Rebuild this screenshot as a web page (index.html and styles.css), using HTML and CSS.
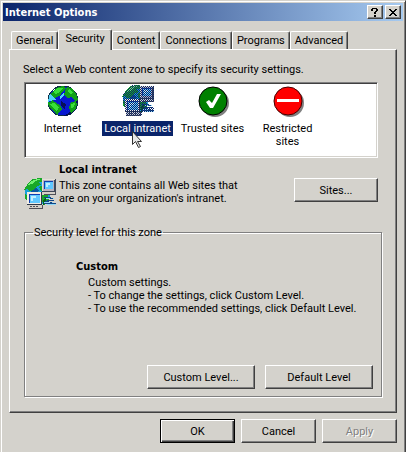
FILE: index.html
```html
<!DOCTYPE html>
<html lang="en">
<head>
<meta charset="utf-8">
<title>Internet Options</title>
<link rel="stylesheet" href="styles.css">
</head>
<body>
<svg class="defs" aria-hidden="true">
  <defs>
    <pattern id="weave" width="2" height="2" patternUnits="userSpaceOnUse">
      <path fill="#0a246a" d="M0 0h1v1H0zM1 1h1v1H1z"/>
    </pattern>
    <g id="network" shape-rendering="crispEdges">
      <circle cx="14" cy="14" r="13" fill="#18a0d8"/>
      <path fill="#0858a0" d="M8 11l4-1 3 2-3 3H7z"/>
      <path fill="#18a828" d="M4 5 9 1l8-1 3 3-5 1 2 3-4 1-3 4-4 1-3-2-3 1zM1 15l2 3v5l-2-3zM15 9l5-2v7l-3-1zM18 15l5 1 2 4-1 4-4 3-2-4z"/>
      <path fill="#70f070" d="M7 3l6-2h4l-5 2-4 3-4 1z"/>
      <path fill="#086018" d="M19 22l4-3-1 5-3 3z"/>
      <path fill="#404858" d="M18 1h14v13H18z"/>
      <path fill="#e4e0d8" d="M18 1h13v1H19v11h-1z"/>
      <path fill="#b8b4c0" d="M19 2h11v11H19z"/>
      <path fill="#1040b0" d="M20 3h9v8h-9z"/>
      <path fill="#60c8ff" d="M21 4h8v7h-8z"/>
      <path fill="#c0f0ff" d="M22 5h4v2h-2v2h-2z"/>
      <path fill="#d4d0c8" d="M18 14h13v3H18z"/>
      <path fill="#505058" d="M20 16h12v1H20zM31 14h1v3h-1z"/>
      <path fill="#303848" d="M3 14h15v13H3z"/>
      <path fill="#f0ece4" d="M3 14h14v12H3z"/>
      <path fill="#1040b0" d="M5 16h11v9H5z"/>
      <path fill="#60c8ff" d="M6 17h10v8H6z"/>
      <path fill="#c0f0ff" d="M7 18h5v2H9v3H7z"/>
      <path fill="#d4d0c8" d="M4 27h15v3H4z"/>
      <path fill="#505058" d="M6 28h2v1H6zM9 28h2v1H9zM12 28h2v1h-2zM5 30h14v1H5zM18 27h1v4h-1z"/>
      <path fill="#90d8f8" d="M22 20h8v1h-8zM20 24h9v1h-9zM23 26h9v1h-9z"/>
      <path fill="#104888" d="M20 19h7v1h-7zM26 20h3v1h-3zM23 22h7v1h-7zM21 23h4v1h-4zM20 25h12v1H20zM26 24h2v1h-2z"/>
    </g>
  </defs>
</svg>
<main class="window">
  <header class="titlebar">
    <h1>Internet Options</h1>
    <button class="caption" type="button" aria-label="Help">
      <svg width="8" height="9" viewBox="0 0 8 9" shape-rendering="crispEdges"><path d="M1 0h5v1H1zM0 1h2v2H0zM5 1h2v2H5zM4 3h2v1H4zM3 4h2v2H3zM3 7h2v2H3z"/></svg>
    </button>
    <button class="caption" type="button" aria-label="Close">
      <svg width="8" height="7" viewBox="0 0 8 7" shape-rendering="crispEdges"><path d="M0 0h2v1H0zM6 0h2v1H6zM1 1h2v1H1zM5 1h2v1H5zM2 2h4v1H2zM3 3h2v1H3zM2 4h4v1H2zM1 5h2v1H1zM5 5h2v1H5zM0 6h2v1H0zM6 6h2v1H6z"/></svg>
    </button>
  </header>
  <div class="content">
    <nav class="tabs" role="tablist">
      <button class="tab" type="button" role="tab">General</button>
      <button class="tab selected" type="button" role="tab" aria-selected="true">Security</button>
      <button class="tab" type="button" role="tab">Content</button>
      <button class="tab" type="button" role="tab">Connections</button>
      <button class="tab" type="button" role="tab">Programs</button>
      <button class="tab" type="button" role="tab">Advanced</button>
    </nav>
    <section class="panel">
      <p class="prompt">Select a Web content zone to specify its security settings.</p>
      <ul class="zones">
        <li class="zone">
          <svg width="32" height="32" viewBox="0 0 32 32" shape-rendering="crispEdges">
            <circle cx="16" cy="16" r="15" fill="#0818d0" stroke="#103048"/>
            <path fill="#061058" d="M28 7c4 7 3 14 0 18-4 5-8 6-12 6 6-2 10-6 12-12S29 11 28 7zM14 16l5 3-1 5-4-3z"/>
            <path fill="#10a018" d="M4 8 9 3l7-2 3 2-3 3-3 5-4 1-3 4H2zM1 17l5-1 7 4 2 4-3 3-1 3-4-3-5-5zM20 2l6 2 4 7 1 4-3 1-3-4-5 1-3-4zM24 17l5-1 1 4-2 5-4 3-2-5z"/>
            <path fill="#38e038" d="M6 7l5-4h5l-4 5-4 1zM2 19l5-1 5 4-2 4-4-3zM22 4l4 3-2 3-3-3zM24 19l4-1-1 4-3 1z"/>
            <path fill="#50d0f8" d="M3 8l3 4 3 3H6l-5 2 1-5zM13 11l4-3v2l-4 4z"/>
            <path fill="#e8ffff" d="M5 6l3-2-2 3z"/>
          </svg>
          <span class="label">Internet</span>
        </li>
        <li class="zone">
          <svg width="32" height="32" viewBox="0 0 32 32">
            <use href="#network"/>
            <path fill="url(#weave)" shape-rendering="crispEdges" d="M9 0h9v1h14v16h-7v5h7v5H20v4H4v-4H3v-5L1 18V10L4 5z"/>
          </svg>
          <span class="label active">Local intranet</span>
          <svg class="pointer" width="13" height="20" viewBox="0 0 13 20"><path fill="#e8e8e8" stroke="#333" d="M1.500 1.500v13l3-3 3 6 2-1-3-5h4z"/></svg>
        </li>
        <li class="zone">
          <svg width="32" height="32" viewBox="0 0 32 32">
            <circle cx="18" cy="18" r="14" fill="#808080"/>
            <circle cx="16" cy="16" r="14" fill="#008000" stroke="#000"/>
            <path fill="#fff" d="M9 17l3-2 3 3 5-9h4l-8 14h-3z"/>
          </svg>
          <span class="label">Trusted sites</span>
        </li>
        <li class="zone">
          <svg width="32" height="32" viewBox="0 0 32 32">
            <circle cx="18" cy="18" r="14" fill="#808080"/>
            <circle cx="16" cy="16" r="14" fill="#f00" stroke="#400"/>
            <path fill="#fff" d="M5 14h22v3H5z"/>
          </svg>
          <span class="label">Restricted<br>sites</span>
        </li>
      </ul>
      <div class="details">
        <svg class="details-icon" width="32" height="32" viewBox="0 0 32 32"><use href="#network"/></svg>
        <div class="about">
          <h2>Local intranet</h2>
          <p>This zone contains all Web sites that<br>are on your organization's intranet.</p>
        </div>
        <button class="button sites" type="button">Sites...</button>
      </div>
      <fieldset class="level">
        <legend>Security level for this zone</legend>
        <div class="custom">
          <h2>Custom</h2>
          <p>Custom settings.<br>- To change the settings, click Custom Level.<br>- To use the recommended settings, click Default Level.</p>
        </div>
        <div class="level-actions">
          <button class="button" type="button">Custom Level...</button>
          <button class="button" type="button">Default Level</button>
        </div>
      </fieldset>
    </section>
    <footer class="actions">
      <button class="button default" type="button">OK</button>
      <button class="button" type="button">Cancel</button>
      <button class="button" type="button" disabled>Apply</button>
    </footer>
  </div>
</main>
</body>
</html>
```
FILE: styles.css
```css
* { box-sizing: border-box; }

:root {
  --face: #d4d2cc;
  --shadow: #808080;
  --dark: #404040;
}

body, h1, h2, p, ul { margin: 0; padding: 0; }

body, button {
  font: 11px/13px Roboto, "DejaVu Sans Condensed", sans-serif;
  color: #000;
}

h1, h2 {
  font: bold 11px/13px "DejaVu Sans Condensed", "DejaVu Sans", sans-serif;
}

.defs { position: absolute; width: 0; height: 0; }

.window {
  min-height: 100vh;
  background: var(--face);
  border: 1px solid;
  border-color: var(--face) var(--dark) var(--dark) var(--face);
  box-shadow: inset 1px 1px #fff, inset -1px -1px var(--shadow);
  padding: 2px;
}

.titlebar {
  display: flex;
  align-items: center;
  gap: 2px;
  height: 18px;
  padding: 0 2px;
  color: #fff;
  background: linear-gradient(90deg, #0a246a, #a6caf0);
}

.titlebar h1 { flex: 1; }

.caption, .button {
  display: flex;
  align-items: center;
  justify-content: center;
  padding: 0;
  background: var(--face);
  border: 1px solid;
  border-color: #fff var(--dark) var(--dark) #fff;
  box-shadow: inset -1px -1px var(--shadow);
}

.caption { width: 16px; height: 14px; }

.content { padding: 8px 6px; }

.tabs {
  display: flex;
  align-items: flex-end;
  height: 20px;
  padding: 0 2px;
}

.tab {
  height: 18px;
  padding: 0 4px;
  background: var(--face);
  border: 1px solid;
  border-color: #fff var(--dark) transparent #fff;
  border-bottom: 0;
  border-radius: 2px 2px 0 0;
  box-shadow: inset -1px 0 var(--shadow);
}

.tab.selected {
  position: relative;
  height: 21px;
  margin-bottom: -1px;
  padding: 0 6px 3px;
}

.panel {
  padding: 13px 14px 15px 13px;
  border: 1px solid;
  border-color: #fff var(--dark) var(--dark) #fff;
  box-shadow: inset -1px -1px var(--shadow);
}

.zones {
  display: flex;
  height: 76px;
  margin: 6px 4px 0 1px;
  padding: 2px 0;
  list-style: none;
  background: #fff;
  border: 1px solid;
  border-color: var(--shadow) #fff #fff var(--shadow);
  box-shadow: inset 1px 1px var(--dark), inset -1px -1px var(--face);
}

.zone {
  position: relative;
  display: flex;
  flex-direction: column;
  align-items: center;
  gap: 4px;
  width: 75px;
  text-align: center;
}

.label { padding: 1px 2px; }

.active { color: #fff; background: #0a246a; white-space: nowrap; }

.pointer { position: absolute; left: 31px; top: 45px; }

.details {
  display: flex;
  align-items: flex-start;
  gap: 3px;
  margin: 5px 4px 0 1px;
}

.details-icon { margin-top: 15px; }

.about { flex: 1; }

.about p, .custom p { margin-top: 3px; }

.sites { width: 84px; margin-top: 15px; }

.level {
  display: flex;
  flex-direction: column;
  margin: 16px 0 0 1px;
  padding: 21px 8px 7px;
  border: 1px solid var(--shadow);
  box-shadow: inset 1px 1px #fff, 1px 1px #fff;
}

.level legend { padding: 0 1px; }

.custom { padding-left: 43px; }

.custom p { padding-left: 12px; }

.level-actions {
  display: flex;
  justify-content: flex-end;
  gap: 10px;
  margin-top: 50px;
}

.button { height: 24px; }

.level-actions .button { width: 108px; }

.actions {
  display: flex;
  justify-content: flex-end;
  gap: 6px;
  margin-top: 6px;
}

.actions .button { width: 75px; }

.default {
  border-color: #000;
  box-shadow: inset 1px 1px #fff, inset -1px -1px var(--dark), inset -2px -2px var(--shadow);
}

.button:disabled { color: var(--shadow); text-shadow: 1px 1px #fff; }
```
